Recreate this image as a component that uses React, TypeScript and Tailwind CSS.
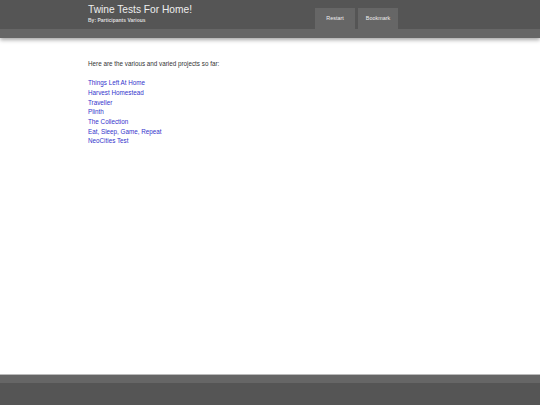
const projects = [
  'Things Left At Home',
  'Harvest Homestead',
  'Traveller',
  'Plinth',
  'The Collection',
  'Eat, Sleep, Game, Repeat',
  'NeoCities Test',
]

export default function App() {
  return (
    <div className="flex min-h-screen flex-col bg-white font-['Liberation_Sans',Arial,sans-serif]">
      <header className="relative z-10 shadow-[0_2px_4px_rgba(0,0,0,0.35)]">
        <div className="h-[29px] bg-[#555555]">
          <div className="mx-auto flex h-full w-[364px] items-start">
            <div className="pt-[4px]">
              <h1 className="text-[10.2px] leading-[12px] text-[#eeeeee]">Twine Tests For Home!</h1>
              <p className="mt-[1px] text-[5px] font-bold leading-[6px] text-[#dddddd]">By: Participants Various</p>
            </div>
            <nav className="ml-auto mr-[54px] mt-[8px] flex h-[21px] gap-[3px]">
              <button className="flex w-[40px] items-center justify-center bg-[#666666] text-[5.4px] text-[#eeeeee]">
                Restart
              </button>
              <button className="flex w-[40px] items-center justify-center bg-[#666666] text-[5.4px] text-[#eeeeee]">
                Bookmark
              </button>
            </nav>
          </div>
        </div>
        <div className="h-[9px] bg-[#666666]" />
      </header>

      <main className="flex-1">
        <div className="mx-auto w-[364px] pt-[21px] text-[6.3px] leading-[9.65px] text-[#333333]">
          <p>Here are the various and varied projects so far:</p>
          <ul className="mt-[9.65px]">
            {projects.map((p) => (
              <li key={p}>
                <a href="#" className="text-[#3333cc]">
                  {p}
                </a>
              </li>
            ))}
          </ul>
        </div>
      </main>

      <footer className="border-t border-[#bbbbbb]">
        <div className="h-[8px] bg-[#666666]" />
        <div className="h-[22px] bg-[#555555]" />
      </footer>
    </div>
  )
}
